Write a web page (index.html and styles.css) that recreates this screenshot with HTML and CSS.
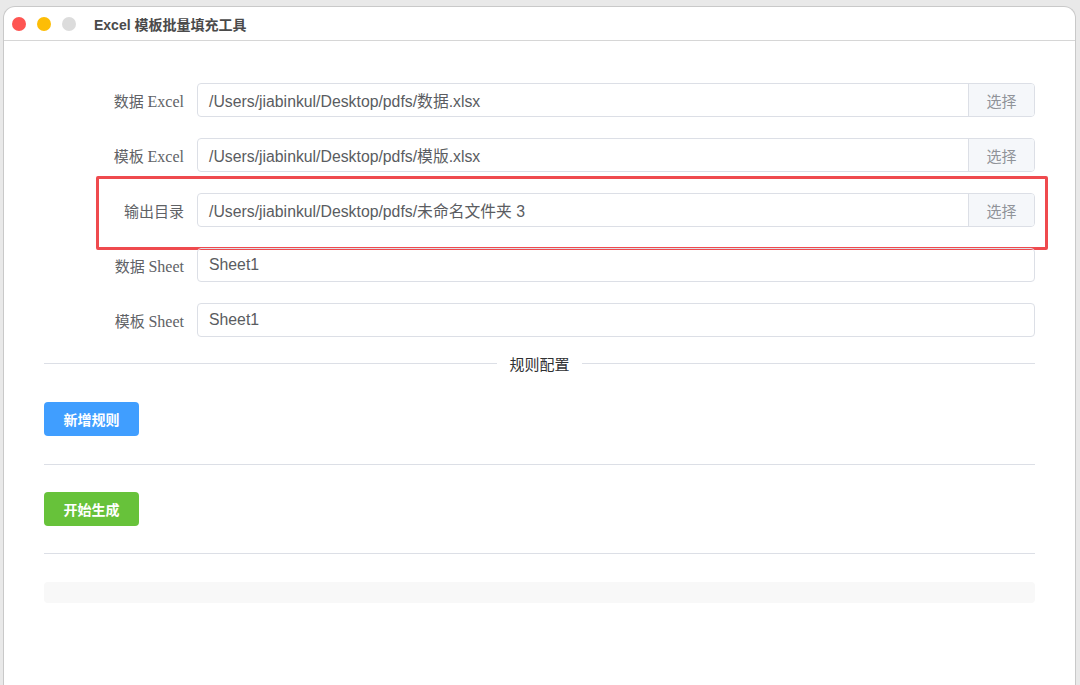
FILE: index.html
```html
<!DOCTYPE html>
<html lang="zh">
<head>
<meta charset="utf-8">
<title>Excel模板批量填充工具</title>
<link rel="stylesheet" href="styles.css">
</head>
<body>
<div class="window">
  <div class="titlebar">
    <div class="lights">
      <span class="light red"></span>
      <span class="light yellow"></span>
      <span class="light gray"></span>
    </div>
    <div class="title">Excel 模板批量填充工具</div>
  </div>
  <div class="content">
    <div class="form">
      <div class="row">
        <label class="label">数据 <span class="latin">Excel</span></label>
        <div class="input group">
          <span class="value">/Users/jiabinkul/Desktop/pdfs/数据.xlsx</span>
          <span class="append">选择</span>
        </div>
      </div>
      <div class="row">
        <label class="label">模板 <span class="latin">Excel</span></label>
        <div class="input group">
          <span class="value">/Users/jiabinkul/Desktop/pdfs/模版.xlsx</span>
          <span class="append">选择</span>
        </div>
      </div>
      <div class="row highlighted">
        <label class="label">输出目录</label>
        <div class="input group">
          <span class="value">/Users/jiabinkul/Desktop/pdfs/未命名文件夹 3</span>
          <span class="append">选择</span>
        </div>
        <div class="annot"></div>
      </div>
      <div class="row">
        <label class="label">数据 <span class="latin">Sheet</span></label>
        <div class="input"><span class="value">Sheet1</span></div>
      </div>
      <div class="row">
        <label class="label">模板 <span class="latin">Sheet</span></label>
        <div class="input"><span class="value">Sheet1</span></div>
      </div>
    </div>

    <div class="divider titled"><span class="divider-text">规则配置</span></div>

    <div class="actions first">
      <button class="btn primary">新增规则</button>
    </div>
    <div class="divider mid"></div>
    <div class="actions second">
      <button class="btn success">开始生成</button>
    </div>
    <div class="divider"></div>
    <div class="log"></div>
  </div>
</div>
</body>
</html>
```

FILE: styles.css
```css
* { box-sizing: border-box; }
html, body { margin: 0; padding: 0; }
body {
  background: #e9e9e9;
  width: 1080px;
  height: 685px;
  overflow: hidden;
  font-family: "Liberation Sans", "Noto Sans CJK SC", sans-serif;
  padding: 6px 4px 0 3px;
}
.window {
  background: #ffffff;
  height: 679px;
  border: 1px solid #c9c9c9;
  border-bottom: none;
  border-radius: 12px 12px 0 0;
  overflow: hidden;
}
.titlebar {
  height: 34px;
  display: flex;
  align-items: center;
  border-bottom: 1px solid #d6d6d6;
  padding-left: 8px;
}
.lights { display: flex; gap: 11px; }
.light {
  width: 14px;
  height: 14px;
  border-radius: 50%;
  display: block;
}
.light.red { background: #fe5552; }
.light.yellow { background: #fdbd06; }
.light.gray { background: #dcdcdc; }
.title {
  margin-left: 18px;
  font-size: 14px;
  font-weight: bold;
  color: #4a4a4a;
  font-family: "Liberation Sans", "Noto Sans CJK SC", sans-serif;
}
.content {
  padding: 42px 40px 0 40px;
}
.form { display: flex; flex-direction: column; gap: 21px; }
.row {
  display: flex;
  align-items: center;
  position: relative;
  height: 34px;
}
.label {
  width: 153px;
  flex: none;
  padding-right: 13px;
  text-align: right;
  font-family: "Liberation Serif", "Noto Sans CJK SC", serif;
  font-size: 15px;
  color: #606266;
}
.latin { font-size: 16px; }
.input {
  flex: 1;
  height: 34px;
  border: 1px solid #dcdfe6;
  border-radius: 4px;
  display: flex;
  align-items: center;
  overflow: hidden;
}
.value {
  flex: 1;
  padding-left: 11px;
  font-size: 15.8px;
  color: #5a5c61;
}
.append {
  width: 66px;
  height: 100%;
  background: #f5f7fa;
  border-left: 1px solid #dcdfe6;
  display: flex;
  align-items: center;
  justify-content: center;
  color: #909399;
  font-size: 15px;
}
.annot {
  position: absolute;
  left: 52px;
  top: -17px;
  width: 952px;
  height: 74px;
  border: 3px solid #ef4a4e;
  border-radius: 2px;
  pointer-events: none;
}
.divider {
  height: 1px;
  background: #dcdfe6;
  position: relative;
  margin: 27px 0 0;
}
.divider.mid { margin-top: 28px; }
.divider.titled {
  margin-top: 26px;
  display: flex;
  justify-content: center;
  align-items: center;
}
.divider-text {
  background: #fff;
  padding: 0 12px;
  font-family: "Liberation Serif", "Noto Sans CJK SC", serif;
  font-size: 15px;
  color: #303133;
}
.actions.first { padding-top: 38px; }
.actions.second { padding-top: 27px; }
.btn {
  width: 95px;
  height: 34px;
  border: none;
  border-radius: 4px;
  color: #fff;
  font-size: 14px;
  font-weight: bold;
  font-family: "Liberation Sans", "Noto Sans CJK SC", sans-serif;
  padding: 0;
}
.btn.primary { background: #409eff; }
.btn.success { background: #67c23a; }
.log {
  margin-top: 28px;
  height: 21px;
  background: #f8f8f8;
  border-radius: 4px;
}
```
